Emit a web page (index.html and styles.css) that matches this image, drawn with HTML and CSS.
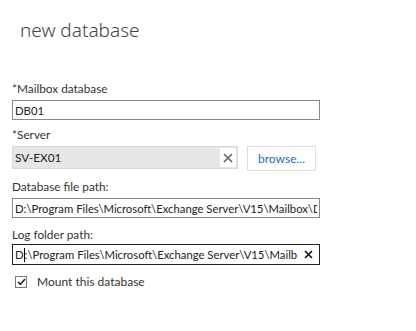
FILE: index.html
```html
<!DOCTYPE html>
<html lang="en">
<head>
    <meta charset="UTF-8">
    <meta name="viewport" content="width=device-width, initial-scale=1.0">
    <title>new database</title>
    <link rel="stylesheet" href="styles.css">
</head>
<body>
    <div class="dialog">
        <h1>new database</h1>
        <form class="db-form">
            <div class="form-group">
                <label for="name">*Mailbox database</label>
                <input type="text" id="name" class="field" value="DB01">
            </div>
            <div class="form-group server-group">
                <label for="server">*Server</label>
                <div class="server-row">
                    <div class="picker">
                        <input type="text" id="server" class="picker-input" value="SV-EX01" readonly>
                        <span class="clear">
                            <svg width="10" height="10" viewBox="0 0 10 10"><path d="M1 1 L9 9 M9 1 L1 9" stroke="#666" stroke-width="1.7"/></svg>
                        </span>
                    </div>
                    <button type="button" class="browse">browse...</button>
                </div>
            </div>
            <div class="form-group">
                <label for="edb">Database file path:</label>
                <input type="text" id="edb" class="field" value="D:\Program Files\Microsoft\Exchange Server\V15\Mailbox\DB01\DB01.edb">
            </div>
            <div class="form-group log-group">
                <label for="log">Log folder path:</label>
                <div class="field log-field">
                    <span class="log-text">D<i class="caret"></i>:\Program Files\Microsoft\Exchange Server\V15\Mailb</span>
                    <span class="clear-dark">
                        <svg width="9" height="9" viewBox="0 0 9 9"><path d="M1 1 L8 8 M8 1 L1 8" stroke="#111" stroke-width="1.6"/></svg>
                    </span>
                </div>
            </div>
            <label class="check">
                <span class="box">
                    <svg width="9" height="8" viewBox="0 0 9 8"><path d="M1 4 L3.4 6.4 L8 1" fill="none" stroke="#222" stroke-width="1.6"/></svg>
                </span>
                Mount this database
            </label>
        </form>
    </div>
</body>
</html>
```

FILE: styles.css
```css
body {
    margin: 0;
    background: #ffffff;
    font-family: 'Lato', 'Noto Sans', sans-serif;
    color: #333333;
}

.dialog {
    padding: 18px 0 0 12px;
}

h1 {
    margin: 0 0 39px 8px;
    font-family: 'Noto Sans', sans-serif;
    font-size: 19px;
    font-weight: 300;
    color: #444444;
    line-height: 24px;
}

.form-group {
    margin-bottom: 7px;
}

.form-group label {
    display: block;
    font-size: 11.8px;
    line-height: 16px;
    margin-bottom: 3px;
    color: #333333;
}

.server-group {
    margin-bottom: 8px;
}

.log-group {
    margin-top: 9px;
}

.log-group label {
    margin-bottom: 1px;
}

.field {
    box-sizing: border-box;
    display: block;
    width: 308px;
    height: 20px;
    margin: 0;
    padding: 0 2px;
    border: 1px solid #888888;
    font-family: inherit;
    font-size: 11.3px;
    color: #222222;
    overflow: hidden;
    white-space: nowrap;
    outline: none;
}

.server-row {
    display: flex;
    align-items: flex-start;
    gap: 9px;
}

.picker {
    box-sizing: border-box;
    width: 226px;
    height: 23px;
    display: flex;
    align-items: center;
    background: #e6e6e6;
    border: 1px solid #d8d8d8;
    padding-right: 1px;
}

.picker-input {
    flex: 1;
    min-width: 0;
    border: none;
    background: transparent;
    font-family: inherit;
    font-size: 11.8px;
    color: #222222;
    padding: 0 2px;
    outline: none;
}

.clear {
    width: 16px;
    height: 19px;
    background: #ffffff;
    display: flex;
    align-items: center;
    justify-content: center;
}

.browse {
    box-sizing: border-box;
    width: 69px;
    height: 25px;
    background: #ffffff;
    border: 1px solid #dddddd;
    color: #1f6cc4;
    font-family: inherit;
    font-size: 12px;
    padding: 0;
}

.log-field {
    height: 21px;
    display: flex;
    align-items: center;
    border-color: #222222;
}

.log-text {
    flex: 1;
    min-width: 0;
    overflow: hidden;
    line-height: 18px;
}

.caret {
    display: inline-block;
    width: 1px;
    height: 14px;
    background: #000000;
    vertical-align: -3px;
}

.clear-dark {
    display: flex;
    padding: 0 4px 0 6px;
}

.check {
    display: flex;
    align-items: center;
    gap: 10px;
    margin: 10px 0 0 3px;
    font-size: 12px;
    line-height: 14px;
    color: #333333;
}

.box {
    box-sizing: border-box;
    width: 12px;
    height: 12px;
    border: 1px solid #777777;
    display: flex;
    align-items: center;
    justify-content: center;
}
```
